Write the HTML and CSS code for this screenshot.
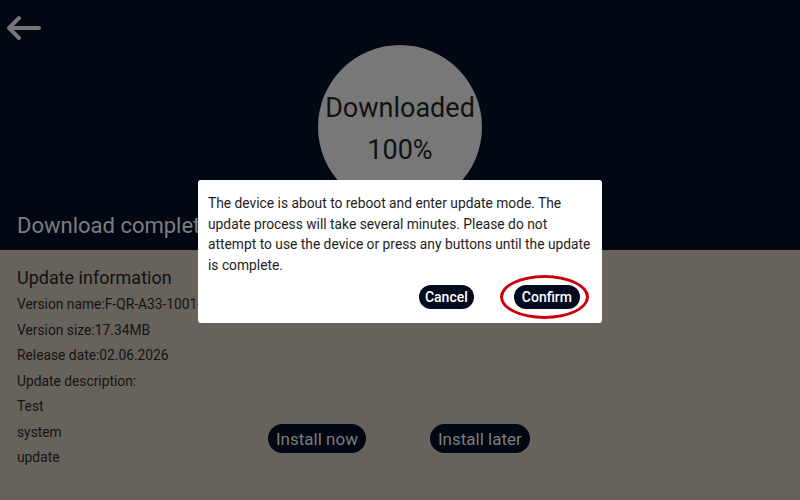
FILE: index.html
```html
<!DOCTYPE html>
<html lang="en">
<head>
    <meta charset="UTF-8">
    <meta name="viewport" content="width=device-width, initial-scale=1.0">
    <title>System Update</title>
    <link rel="stylesheet" href="styles.css">
</head>
<body>
<div class="screen">
    <section class="top">
        <div class="back">
            <svg width="36" height="26" viewBox="0 0 36 26">
                <path d="M34 13 H4 M14 3 L4 13 L14 23" fill="none" stroke="#767676" stroke-width="4" stroke-linecap="round" stroke-linejoin="round"/>
            </svg>
        </div>
        <div class="progress">
            <span>Downloaded</span>
            <span>100%</span>
        </div>
        <div class="status">Download complete</div>
    </section>

    <section class="bottom">
        <div class="info">
            <h2>Update information</h2>
            <p>Version name:F-QR-A33-1001-V1.0.2</p>
            <p>Version size:17.34MB</p>
            <p>Release date:02.06.2026</p>
            <p>Update description:</p>
            <p>Test</p>
            <p>system</p>
            <p>update</p>
        </div>
        <div class="actions">
            <button type="button" class="btn-dim">Install now</button>
            <button type="button" class="btn-dim">Install later</button>
        </div>
    </section>

    <div class="dialog">
        <p>The device is about to reboot and enter update mode. The update process will take several minutes. Please do not attempt to use the device or press any buttons until the update is complete.</p>
        <div class="dialog-buttons">
            <button type="button" class="btn">Cancel</button>
            <button type="button" class="btn mark">Confirm</button>
        </div>
    </div>
</div>
</body>
</html>
```

FILE: styles.css
```css
:root {
    --top-bg: #020714;
    --bottom-bg: #67625b;
    --circle: #787878;
    --navy: #030a1e;
}

* {
    box-sizing: border-box;
}

body {
    margin: 0;
    font-family: Roboto, 'Noto Sans', sans-serif;
    background: var(--bottom-bg);
}

.screen {
    position: relative;
    width: 800px;
    height: 500px;
    overflow: hidden;
}

.top {
    height: 250px;
    background: var(--top-bg);
    padding: 15px 0 0 0;
    display: flex;
    flex-direction: column;
}

.back {
    padding-left: 5px;
    height: 26px;
}

.back svg {
    display: block;
}

.progress {
    width: 164px;
    height: 164px;
    margin: 4px auto 0;
    border-radius: 50%;
    background: var(--circle);
    display: flex;
    flex-direction: column;
    justify-content: center;
    align-items: center;
    padding-top: 4px;
    font-size: 27px;
    line-height: 42px;
    color: #121212;
}

.status {
    margin-top: 4px;
    padding-left: 17px;
    font-size: 22px;
    line-height: 26px;
    color: #7e7e7e;
}

.bottom {
    display: flex;
    padding: 16px 0 0 17px;
}

.info {
    width: 251px;
}

.info h2 {
    margin: 0 0 3px;
    font-size: 18px;
    font-weight: normal;
    line-height: 23px;
    color: #111;
}

.info p {
    margin: 0;
    font-size: 13.8px;
    line-height: 25.5px;
    color: #141414;
    white-space: nowrap;
}

.actions {
    display: flex;
    gap: 64px;
    margin-top: 158px;
    align-self: flex-start;
}

.btn-dim {
    height: 29px;
    padding: 0 8px;
    border: none;
    border-radius: 15px;
    background: var(--top-bg);
    color: #7c7c7c;
    font-family: inherit;
    font-size: 17px;
}

.dialog {
    position: absolute;
    left: 198px;
    top: 180px;
    width: 404px;
    height: 143px;
    background: #fff;
    border-radius: 3px;
    padding: 13px 10px 0 10px;
}

.dialog p {
    margin: 0;
    font-size: 13.8px;
    line-height: 20.5px;
    color: #1e1e1e;
}

.dialog-buttons {
    display: flex;
    justify-content: flex-end;
    gap: 40px;
    padding-right: 12px;
    margin-top: 10px;
}

.btn {
    position: relative;
    height: 24px;
    padding: 0 6px;
    border: none;
    border-radius: 12px;
    background: var(--navy);
    color: #fff;
    font-family: inherit;
    font-size: 14px;
    font-weight: 500;
}

.btn.mark {
    padding: 0 8px;
}

.mark::after {
    content: "";
    position: absolute;
    left: -14px;
    right: -9px;
    top: -10px;
    bottom: -10px;
    border: 3px solid #c8000c;
    border-radius: 50%;
}
```
